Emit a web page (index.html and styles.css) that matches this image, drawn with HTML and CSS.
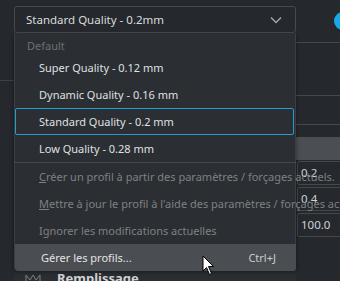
FILE: index.html
```html
<!DOCTYPE html>
<html lang="fr">
<head>
    <meta charset="UTF-8">
    <meta name="viewport" content="width=device-width, initial-scale=1.0">
    <title>Profils</title>
    <link rel="stylesheet" href="styles.css">
</head>
<body>

<div class="page">
    <div class="col-left">
        <div class="left-top"></div>
    </div>

    <div class="col-center">
        <div class="combo">
            <span class="combo-text">Standard Quality - 0.2mm</span>
            <svg class="chevron" width="12" height="8" viewBox="0 0 12 8">
                <polyline points="1,1.5 6,6.5 11,1.5" fill="none" stroke="#a2a5a8" stroke-width="1.5"/>
            </svg>
        </div>
        <div class="setting-row">
            <svg class="setting-icon" width="16" height="12" viewBox="0 0 16 12">
                <polyline points="1,11 1,3 5,8 8,3 11,8 15,3 15,11 1,11" fill="none" stroke="#7c8084" stroke-width="1"/>
            </svg>
            <span class="setting-label">Remplissage</span>
        </div>
    </div>

    <div class="col-right">
        <div class="r-block r-top"><div class="dot"></div></div>
        <div class="r-block r-mid"></div>
        <div class="r-block r-low"></div>
        <div class="r-gray"></div>
        <div class="fields">
            <div class="field">0.2</div>
            <div class="field">0.4</div>
            <div class="field">100.0</div>
        </div>
    </div>

    <div class="menu">
        <div class="menu-header">Default</div>
        <div class="menu-item">Super Quality - 0.12 mm</div>
        <div class="menu-item">Dynamic Quality - 0.16 mm</div>
        <div class="menu-item selected">Standard Quality - 0.2 mm</div>
        <div class="menu-item">Low Quality - 0.28 mm</div>
        <div class="menu-sep"></div>
        <div class="menu-item disabled"><u>C</u>réer un profil à partir des paramètres / forçages actuels.</div>
        <div class="menu-item disabled"><u>M</u>ettre à jour le profil à l'aide des paramètres / forçages actuels.</div>
        <div class="menu-item disabled">Ignorer les modifications actuelles</div>
        <div class="menu-item manage">
            <span>Gérer les profils...</span>
            <span class="shortcut">Ctrl+J</span>
        </div>
    </div>

    <svg class="cursor" width="13" height="21" viewBox="0 0 13 21">
        <path d="M1,1 L1,16 L4.5,12.5 L7.5,19.5 L9.5,18.5 L6.5,11.5 L11.5,11.5 Z" fill="#fff" stroke="#000" stroke-width="1"/>
    </svg>
</div>

</body>
</html>
```

FILE: styles.css
```css
body {
    margin: 0;
    background-color: #25282c;
    font-family: "Noto Sans", sans-serif;
    font-size: 11px;
    color: #dfe1e3;
}
.page {
    position: relative;
    display: flex;
    width: 340px;
    height: 281px;
    overflow: hidden;
}
.col-left {
    width: 14px;
}
.left-top {
    height: 80px;
    border-bottom: 1px solid #3d4044;
}
.col-center {
    width: 282px;
    display: flex;
    flex-direction: column;
    padding-top: 6px;
}
.combo {
    height: 27px;
    box-sizing: border-box;
    border: 1px solid #46494d;
    border-radius: 3px;
    display: flex;
    align-items: center;
    justify-content: space-between;
    padding: 0 13px 0 11px;
    font-size: 11.5px;
    color: #dadcde;
}
.chevron {
    display: block;
}
.setting-row {
    margin-top: auto;
    height: 11px;
    display: flex;
    align-items: flex-start;
    background-color: #2a2d31;
    overflow: hidden;
}
.setting-icon {
    margin: 2px 0 0 11px;
}
.setting-label {
    margin-left: 16px;
    margin-top: -1px;
    font-size: 13px;
    font-weight: bold;
    color: #cfd2d5;
}
.col-right {
    width: 44px;
}
.r-block {
    border-bottom: 1px solid #45484c;
}
.r-top {
    height: 42px;
    box-sizing: border-box;
    padding-top: 12px;
    height: 43px;
}
.dot {
    width: 18px;
    height: 18px;
    border-radius: 50%;
    background-color: #1aa7e8;
    margin-left: 38px;
}
.r-mid {
    height: 52px;
}
.r-low {
    height: 28px;
}
.r-gray {
    margin-top: 12px;
    height: 23px;
    background-color: #4b4e52;
}
.fields {
    display: flex;
    flex-direction: column;
    gap: 2px;
    margin: 1px 0 0 1px;
}
.field {
    width: 60px;
    height: 24px;
    box-sizing: border-box;
    border: 1px solid #44474b;
    border-radius: 2px;
    padding-left: 3px;
    line-height: 22px;
    font-size: 11.5px;
    color: #cdd3d9;
}
.menu {
    position: absolute;
    left: 14px;
    top: 33px;
    width: 282px;
    height: 237px;
    box-sizing: border-box;
    background-color: #2b2e32;
    border: 1px solid #3b3e42;
    border-top: none;
    border-radius: 0 0 3px 3px;
    box-shadow: 0 2px 4px rgba(0, 0, 0, 0.4);
}
.menu-header {
    height: 21px;
    box-sizing: border-box;
    padding: 4px 0 0 12px;
    line-height: 18px;
    color: #6d7073;
}
.menu-item {
    height: 27px;
    line-height: 27px;
    padding-left: 24px;
    white-space: nowrap;
    box-sizing: border-box;
}
.menu-item.selected {
    border: 1px solid #229dd4;
    border-radius: 2px;
    line-height: 25px;
    padding-left: 23px;
    margin-right: 1px;
}
.menu-item.disabled {
    color: #7e8184;
}
.menu-sep {
    height: 1px;
    background-color: #45484c;
    margin: 0 -1px;
}
.menu-item.manage {
    display: flex;
    justify-content: space-between;
    padding: 0 20px 0 26px;
    background-color: #4a4d51;
    border-radius: 0 0 3px 3px;
    margin-right: -1px;
    color: #e2e4e6;
}
.shortcut {
    color: #c9cdd1;
}
.cursor {
    position: absolute;
    left: 202px;
    top: 255px;
}
```
